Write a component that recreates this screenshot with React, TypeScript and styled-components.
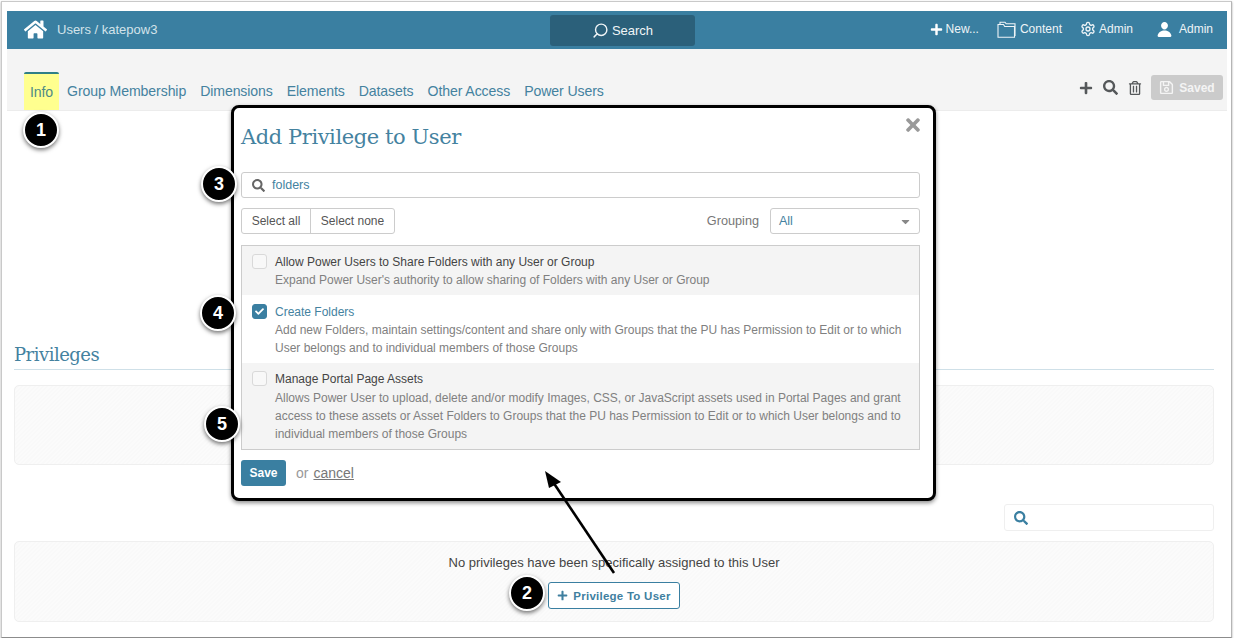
import React from "react";
import styled, { createGlobalStyle } from "styled-components";
import { FaHome, FaPlus, FaSearch, FaRegTrashAlt, FaRegSave, FaTimes, FaCheck, FaCaretDown } from "react-icons/fa";
import { IoPerson } from "react-icons/io5";
import { LuSearch, LuSettings } from "react-icons/lu";

const Global = createGlobalStyle`
  html, body { margin: 0; padding: 0; background: #fff; }
  body { font-family: "Liberation Sans", Arial, sans-serif; overflow: hidden; }
  * { box-sizing: border-box; }
`;

const Frame = styled.div`
  position: relative;
  width: 1231px;
  height: 637px;
  margin: 1px 0 0 1px;
  padding: 9px 0 0 5px;
  border: 1px solid #c9c9c9;
  border-bottom-color: #8c8c8c;
  border-right-color: #b5b5b5;
  box-shadow: 0 1px 2px rgba(0, 0, 0, 0.35);
  background: #fff;
  overflow: hidden;
`;
const Header = styled.header`
  display: flex;
  align-items: center;
  width: 1220px;
  height: 38px;
  padding-bottom: 2px;
  background: #3a7fa1;
  color: #fff;
`;
const Brand = styled.div`
  flex: 0 0 543px;
  display: flex;
  align-items: center;
  gap: 10px;
  padding-left: 17px;
  color: #fff;
  font-size: 23px;
`;
const Crumb = styled.span`
  font-size: 13px;
  color: #d3e3ea;
`;
const SearchBtn = styled.div`
  width: 145px;
  height: 31px;
  margin-top: 2px;
  display: flex;
  align-items: center;
  justify-content: center;
  gap: 3px;
  background: #2b607a;
  border-radius: 3px;
  font-size: 13px;
  color: #f0f5f7;
`;
const HeaderNav = styled.nav`
  margin-left: auto;
  display: flex;
  align-items: center;
  padding-right: 14px;
`;
const NavItem = styled.span<{ $ml: number; $gap: number }>`
  display: flex;
  align-items: center;
  gap: ${(p) => p.$gap}px;
  margin-left: ${(p) => p.$ml}px;
  font-size: 12px;
  color: #eef4f7;
`;
const TabBar = styled.div`
  width: 1220px;
  height: 62px;
  background: #f4f4f4;
  border-bottom: 1px solid #ececec;
  display: flex;
  align-items: flex-end;
  padding-left: 17px;
  position: relative;
`;
const Tab = styled.span<{ $active?: boolean }>`
  height: 38px;
  display: flex;
  align-items: center;
  padding: 0 ${(p) => (p.$active ? 6 : 0)}px;
  margin-right: ${(p) => (p.$active ? 8 : 14)}px;
  font-size: 14.1px;
  letter-spacing: -0.1px;
  color: ${(p) => (p.$active ? "#4f8a86" : "#44829f")};
  background: ${(p) => (p.$active ? "#ffff8f" : "transparent")};
  border-top: ${(p) => (p.$active ? "2px solid #2f7f86" : "0")};
  border-radius: 2px 2px 0 0;
`;
const Tools = styled.div`
  margin-left: auto;
  margin-right: 4px;
  margin-bottom: 10px;
  display: flex;
  align-items: center;
  color: #55585a;
`;
const ToolIcon = styled.span<{ $mr: number; $size: number }>`
  display: flex;
  margin-right: ${(p) => p.$mr}px;
  font-size: ${(p) => p.$size}px;
`;
const SavedBtn = styled.span`
  width: 72px;
  height: 25px;
  display: flex;
  align-items: center;
  justify-content: center;
  gap: 5px;
  background: #cbcbcb;
  border-radius: 3px;
  color: #f4f4f4;
  font-size: 12px;
  font-weight: 700;
`;
const Main = styled.main`
  padding: 0 17px 0 7px;
`;
const Heading = styled.h2`
  margin: 232px 0 0;
  padding-top: 1px;
  height: 27px;
  border-bottom: 1px solid #cfe0e8;
  font-family: "DejaVu Serif", serif;
  font-weight: 400;
  font-size: 18px;
  letter-spacing: -0.5px;
  line-height: 22px;
  color: #44829f;
`;
const Panel = styled.div<{ $h: number }>`
  height: ${(p) => p.$h}px;
  border: 1px solid #efefef;
  border-radius: 5px;
  background: repeating-linear-gradient(135deg, #fbfbfb 0 1.5px, #f9f9f9 1.5px 3px);
  display: flex;
  flex-direction: column;
  align-items: center;
  padding-top: 13px;
  font-size: 13px;
  color: #444;
`;
const FirstPanel = styled(Panel)`
  margin-top: 15px;
`;
const SearchRow = styled.div`
  display: flex;
  justify-content: flex-end;
  margin: 39px 0 10px;
`;
const SmallSearch = styled.div`
  width: 210px;
  height: 27px;
  border: 1px solid #efefef;
  border-radius: 3px;
  display: flex;
  align-items: center;
  padding-left: 9px;
  color: #3a7fa1;
  font-size: 14px;
`;
const AddBtn = styled.span`
  margin-top: 12px;
  width: 132px;
  height: 27px;
  display: flex;
  align-items: center;
  justify-content: center;
  gap: 5px;
  border: 1px solid #3a7fa1;
  border-radius: 3px;
  background: #fff;
  color: #3f7f9f;
  font-size: 11.5px;
  letter-spacing: 0.25px;
  font-weight: 700;
`;
const Modal = styled.section`
  position: absolute;
  left: 229px;
  top: 103px;
  width: 705px;
  height: 396px;
  background: #fff;
  border: 3px solid #000;
  border-radius: 8px;
  box-shadow: 0 2px 4px rgba(0, 0, 0, 0.45);
  padding: 0 13px 0 7px;
`;
const CloseBtn = styled.span`
  position: absolute;
  right: 10px;
  top: 7px;
  display: flex;
  color: #999;
  font-size: 20px;
`;
const ModalTitle = styled.h3`
  margin: 0;
  padding-top: 14px;
  height: 64px;
  font-family: "DejaVu Serif", serif;
  font-weight: 400;
  font-size: 21px;
  letter-spacing: -0.42px;
  line-height: 30px;
  color: #44829f;
`;
const FilterInput = styled.div`
  height: 26px;
  border: 1px solid #ccc;
  border-radius: 3px;
  display: flex;
  align-items: center;
  gap: 7px;
  padding-left: 10px;
  font-size: 12.5px;
  color: #44829f;
`;
const FilterIcon = styled.span`
  display: flex;
  color: #666;
  font-size: 13px;
`;
const Controls = styled.div`
  display: flex;
  align-items: center;
  height: 26px;
  margin: 10px 0 11px;
`;
const SelectGroup = styled.div`
  display: flex;
  height: 26px;
  border: 1px solid #ccc;
  border-radius: 3px;
`;
const SelectBtn = styled.span<{ $divider?: boolean; $w: number }>`
  width: ${(p) => p.$w}px;
  display: flex;
  align-items: center;
  justify-content: center;
  font-size: 12px;
  color: #555;
  border-left: ${(p) => (p.$divider ? "1px solid #ccc" : "0")};
`;
const GroupLabel = styled.span`
  margin-left: auto;
  margin-right: 11px;
  font-size: 12.7px;
  color: #777;
`;
const GroupSelect = styled.div`
  width: 150px;
  height: 26px;
  border: 1px solid #ccc;
  border-radius: 3px;
  display: flex;
  align-items: center;
  justify-content: space-between;
  padding: 0 7px 0 8px;
  font-size: 12.5px;
  color: #44829f;
`;
const Caret = styled.span`
  display: flex;
  color: #888;
  font-size: 13px;
`;
const List = styled.div`
  border: 1px solid #ccc;
`;
const Row = styled.div<{ $alt?: boolean; $h: number; $top: number }>`
  display: flex;
  height: ${(p) => p.$h}px;
  padding: ${(p) => p.$top}px 8px 0 10px;
  gap: 8px;
  background: ${(p) => (p.$alt ? "#f4f4f4" : "#fff")};
`;
const Check = styled.span<{ $on?: boolean }>`
  flex: 0 0 15px;
  width: 15px;
  height: 15px;
  border-radius: 3px;
  display: flex;
  align-items: center;
  justify-content: center;
  background: ${(p) => (p.$on ? "#3a7fa1" : "#f8f8f8")};
  border: 1px solid ${(p) => (p.$on ? "#3a7fa1" : "#d9d9d9")};
  color: #fff;
  font-size: 9px;
`;
const RowBody = styled.div`
  flex: 1;
`;
const RowTitle = styled.div<{ $on?: boolean }>`
  font-size: 12px;
  line-height: 16px;
  color: ${(p) => (p.$on ? "#44829f" : "#444")};
`;
const RowDesc = styled.div<{ $gap: number }>`
  margin-top: ${(p) => p.$gap}px;
  font-size: 12px;
  line-height: 18px;
  color: #808080;
`;
const Footer = styled.div`
  display: flex;
  align-items: center;
  margin-top: 10px;
`;
const SaveBtn = styled.span`
  width: 45px;
  height: 26px;
  display: flex;
  align-items: center;
  justify-content: center;
  background: #3a7fa1;
  border-radius: 3px;
  color: #fff;
  font-size: 12px;
  font-weight: 700;
`;
const OrText = styled.span`
  margin-left: 10px;
  font-size: 14px;
  color: #999;
`;
const CancelLink = styled.span`
  margin-left: 5px;
  font-size: 14px;
  color: #777;
  text-decoration: underline;
`;
const Marker = styled.span<{ $x: number; $y: number }>`
  position: absolute;
  left: ${(p) => p.$x - 20}px;
  top: ${(p) => p.$y - 20}px;
  width: 36px;
  height: 36px;
  border: 2px solid #fff;
  border-radius: 50%;
  background: #000;
  color: #fff;
  display: flex;
  align-items: center;
  justify-content: center;
  font-size: 18px;
  font-weight: 700;
  box-shadow: 0 2px 4px rgba(0, 0, 0, 0.55);
`;
const ArrowLayer = styled.svg`
  position: absolute;
  left: -2px;
  top: -2px;
  pointer-events: none;
`;

const FolderIcon = () => (
  <svg width="20" height="17" viewBox="0 0 20 17" fill="none" stroke="#eef4f7" strokeWidth="1.1">
    <path d="M3 4V1.2h5l1.2 1.6H18V15" />
    <path d="M1 3.5h5.5l1.2 2H17.5v10.8H1z" />
  </svg>
);

const rows = [
  {
    title: "Allow Power Users to Share Folders with any User or Group",
    lines: ["Expand Power User's authority to allow sharing of Folders with any User or Group"],
    alt: true,
    h: 49,
    top: 8,
    gap: 1,
  },
  {
    title: "Create Folders",
    lines: [
      "Add new Folders, maintain settings/content and share only with Groups that the PU has Permission to Edit or to which",
      "User belongs and to individual members of those Groups",
    ],
    on: true,
    h: 68,
    top: 9,
    gap: 1,
  },
  {
    title: "Manage Portal Page Assets",
    lines: [
      "Allows Power User to upload, delete and/or modify Images, CSS, or JavaScript assets used in Portal Pages and grant",
      "access to these assets or Asset Folders to Groups that the PU has Permission to Edit or to which User belongs and to",
      "individual members of those Groups",
    ],
    alt: true,
    h: 86,
    top: 8,
    gap: 2,
  },
];

const tabs = ["Group Membership", "Dimensions", "Elements", "Datasets", "Other Access", "Power Users"];
const markers = [
  { n: 1, x: 41, y: 130 },
  { n: 2, x: 527, y: 593 },
  { n: 3, x: 219, y: 184 },
  { n: 4, x: 218, y: 313 },
  { n: 5, x: 222, y: 424 },
];

export default function App() {
  return (
    <>
      <Global />
      <Frame>
        <Header>
          <Brand>
            <FaHome />
            <Crumb>Users / katepow3</Crumb>
          </Brand>
          <SearchBtn>
            <LuSearch size={17} style={{ transform: "scaleX(-1)" }} />
            Search
          </SearchBtn>
          <HeaderNav>
            <NavItem $ml={0} $gap={3}>
              <FaPlus size={13} color="#fff" />
              New...
            </NavItem>
            <NavItem $ml={18} $gap={3}>
              <FolderIcon />
              Content
            </NavItem>
            <NavItem $ml={18} $gap={3}>
              <LuSettings size={16} />
              Admin
            </NavItem>
            <NavItem $ml={23} $gap={6}>
              <IoPerson size={17} color="#fff" />
              Admin
            </NavItem>
          </HeaderNav>
        </Header>
        <TabBar>
          <Tab $active>Info</Tab>
          {tabs.map((t) => (
            <Tab key={t}>{t}</Tab>
          ))}
          <Tools>
            <ToolIcon $mr={10} $size={14}>
              <FaPlus />
            </ToolIcon>
            <ToolIcon $mr={10} $size={15}>
              <FaSearch />
            </ToolIcon>
            <ToolIcon $mr={9} $size={14}>
              <FaRegTrashAlt />
            </ToolIcon>
            <SavedBtn>
              <FaRegSave size={15} />
              Saved
            </SavedBtn>
          </Tools>
        </TabBar>
        <Main>
          <Heading>Privileges</Heading>
          <FirstPanel $h={80} />
          <SearchRow>
            <SmallSearch>
              <FaSearch />
            </SmallSearch>
          </SearchRow>
          <Panel $h={81}>
            No privileges have been specifically assigned to this User
            <AddBtn>
              <FaPlus size={11} />
              Privilege To User
            </AddBtn>
          </Panel>
        </Main>
        <Modal>
          <CloseBtn>
            <FaTimes />
          </CloseBtn>
          <ModalTitle>Add Privilege to User</ModalTitle>
          <FilterInput>
            <FilterIcon>
              <FaSearch />
            </FilterIcon>
            folders
          </FilterInput>
          <Controls>
            <SelectGroup>
              <SelectBtn $w={68}>Select all</SelectBtn>
              <SelectBtn $w={84} $divider>
                Select none
              </SelectBtn>
            </SelectGroup>
            <GroupLabel>Grouping</GroupLabel>
            <GroupSelect>
              All
              <Caret>
                <FaCaretDown />
              </Caret>
            </GroupSelect>
          </Controls>
          <List>
            {rows.map((r) => (
              <Row key={r.title} $alt={r.alt} $h={r.h} $top={r.top}>
                <Check $on={r.on}>{r.on && <FaCheck />}</Check>
                <RowBody>
                  <RowTitle $on={r.on}>{r.title}</RowTitle>
                  <RowDesc $gap={r.gap}>
                    {r.lines.map((l) => (
                      <div key={l}>{l}</div>
                    ))}
                  </RowDesc>
                </RowBody>
              </Row>
            ))}
          </List>
          <Footer>
            <SaveBtn>Save</SaveBtn>
            <OrText>or</OrText>
            <CancelLink>cancel</CancelLink>
          </Footer>
        </Modal>
        <ArrowLayer width="1234" height="640" viewBox="0 0 1234 640">
          <line x1="614" y1="573" x2="553" y2="482" stroke="#000" strokeWidth="2.6" />
          <path d="M545 471 L561 482 L549 488 Z" fill="#000" />
        </ArrowLayer>
        {markers.map((m) => (
          <Marker key={m.n} $x={m.x} $y={m.y}>
            {m.n}
          </Marker>
        ))}
      </Frame>
    </>
  );
}
